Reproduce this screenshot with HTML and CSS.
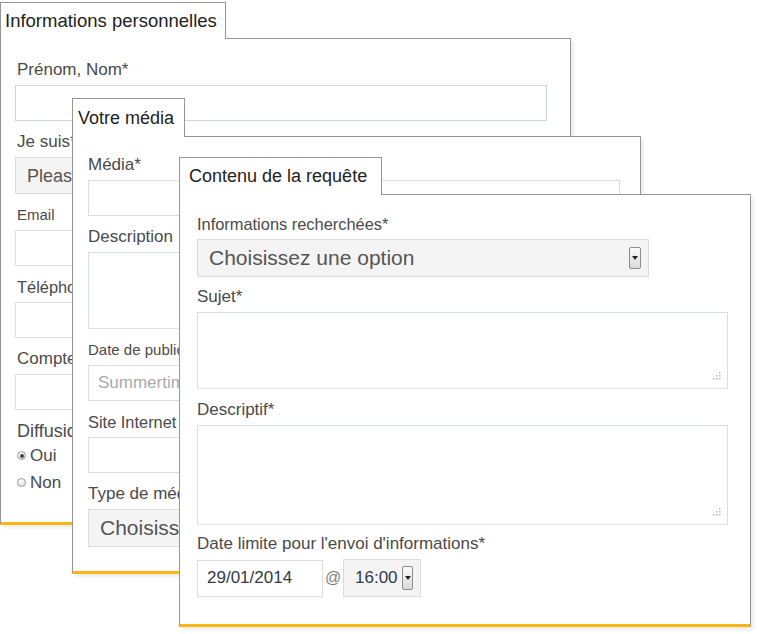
FILE: index.html
```html
<!DOCTYPE html>
<html lang="fr">
<head>
<meta charset="utf-8">
<title>Formulaire</title>
<link rel="stylesheet" href="styles.css">
</head>
<body>
<div class="canvas">

  <section class="panel p1">
    <div class="tab">Informations personnelles</div>
    <div class="pbody">
      <label class="lbl first">Prénom, Nom*</label>
      <input class="input blue" type="text">
      <label class="lbl">Je suis*</label>
      <div class="select s18"><span class="sel-text">Please</span><span class="arrow"></span></div>
      <label class="lbl f15">Email</label>
      <input class="input" type="text">
      <label class="lbl f16">Téléphone</label>
      <input class="input" type="text">
      <label class="lbl">Compte</label>
      <input class="input" type="text">
      <label class="lbl f18">Diffusion</label>
      <div class="radio-row first-radio"><span class="radio checked"></span><span>Oui</span></div>
      <div class="radio-row"><span class="radio"></span><span>Non</span></div>
    </div>
  </section>

  <section class="panel p2">
    <div class="tab">Votre média</div>
    <div class="pbody">
      <label class="lbl first">Média*</label>
      <input class="input" type="text">
      <label class="lbl">Description</label>
      <div class="textarea h77"></div>
      <label class="lbl f15">Date de publication</label>
      <input class="input" type="text" placeholder="Summertime">
      <label class="lbl f16">Site Internet</label>
      <input class="input" type="text">
      <label class="lbl">Type de média</label>
      <div class="select s21"><span class="sel-text">Choisissez une option</span><span class="arrow"></span></div>
    </div>
  </section>

  <section class="panel p3">
    <div class="tab">Contenu de la requête</div>
    <div class="pbody">
      <label class="lbl first f16">Informations recherchées*</label>
      <div class="select s21 narrow"><span class="sel-text">Choisissez une option</span><span class="arrow"></span></div>
      <label class="lbl">Sujet*</label>
      <div class="textarea h77">
        <svg class="grip" width="10" height="10" viewBox="0 0 10 10"><g fill="#b8b8b8"><rect x="8" y="0" width="1.5" height="1.5"/><rect x="5" y="3" width="1.5" height="1.5"/><rect x="8" y="3" width="1.5" height="1.5"/><rect x="2" y="6" width="1.5" height="1.5"/><rect x="5" y="6" width="1.5" height="1.5"/><rect x="8" y="6" width="1.5" height="1.5"/></g></svg>
      </div>
      <label class="lbl g11">Descriptif*</label>
      <div class="textarea h100">
        <svg class="grip" width="10" height="10" viewBox="0 0 10 10"><g fill="#b8b8b8"><rect x="8" y="0" width="1.5" height="1.5"/><rect x="5" y="3" width="1.5" height="1.5"/><rect x="8" y="3" width="1.5" height="1.5"/><rect x="2" y="6" width="1.5" height="1.5"/><rect x="5" y="6" width="1.5" height="1.5"/><rect x="8" y="6" width="1.5" height="1.5"/></g></svg>
      </div>
      <label class="lbl g9">Date limite pour l'envoi d'informations*</label>
      <div class="datetime">
        <input class="input date" type="text" value="29/01/2014">
        <span class="at">@</span>
        <div class="select time"><span class="sel-text">16:00</span><span class="arrow"></span></div>
      </div>
    </div>
  </section>

</div>
</body>
</html>
```

FILE: styles.css
```css
html, body {
  margin: 0;
  padding: 0;
  background: #fff;
}

.canvas {
  position: relative;
  width: 757px;
  height: 634px;
  overflow: hidden;
  font-family: "Liberation Sans", Arial, sans-serif;
  color: #4a4a4a;
}

.panel {
  position: absolute;
  display: flex;
  flex-direction: column;
  align-items: flex-start;
}

.p1 { left: 0; top: 2px; z-index: 1; --gap: 11px; }
.p2 { left: 72px; top: 98px; z-index: 2; --gap: 11px; }
.p3 { left: 179px; top: 157px; z-index: 3; --gap: 10px; }

.tab {
  position: relative;
  z-index: 1;
  margin-bottom: -1px;
  box-sizing: border-box;
  background: #fff;
  border: 1px solid #959595;
  border-bottom: 0;
  display: flex;
  align-items: center;
  font-size: 18px;
  color: #222;
  padding-left: 5px;
  white-space: nowrap;
}

.p1 .tab { width: 226px; height: 37px; font-size: 18.5px; padding-left: 4px; }
.p2 .tab { width: 113px; height: 39px; }
.p3 .tab { width: 203px; height: 38px; padding-left: 9px; }

.pbody {
  box-sizing: border-box;
  background: #fff;
  border: 1px solid #959595;
  border-bottom: 3px solid #fab512;
  box-shadow: 3px 3px 3px rgba(0, 0, 0, 0.07);
  display: flex;
  flex-direction: column;
  align-items: flex-start;
  overflow: hidden;
}

.p1 .pbody { width: 571px; height: 487px; padding: 21px 0 0 14px; }
.p2 .pbody { width: 569px; height: 438px; padding: 18px 0 0 15px; }
.p3 .pbody { width: 572px; height: 433px; padding: 19px 0 0 17px; }

.lbl {
  display: block;
  font-size: 17px;
  line-height: 16px;
  height: 16px;
  margin-top: calc(var(--gap) + 2px);
  margin-bottom: 7px;
  white-space: nowrap;
  color: #4a4a4a;
}
.p1 .lbl { margin-left: 2px; }
.lbl.first { margin-top: 2px; }
.lbl.f15 { font-size: 15px; }
.lbl.f16 { font-size: 16.4px; }
.lbl.f18 { font-size: 18px; }
.lbl.g11 { margin-top: 13px; }
.lbl.g9 { margin-top: 11px; }

.input {
  box-sizing: border-box;
  width: 532px;
  height: 36px;
  margin: 0;
  padding: 0 9px;
  border: 1px solid #dddddd;
  background: #fff;
  font-family: inherit;
  font-size: 17px;
  color: #333a44;
  outline: none;
  flex: none;
}
.input.blue { border-color: #cbd8e4; }
.input::placeholder { color: #aaaaaa; }

.textarea {
  position: relative;
  box-sizing: border-box;
  width: 532px;
  border: 1px solid #d6dee6;
  border-bottom-color: #e2e2e2;
  background: #fff;
  flex: none;
}
.p3 .textarea { width: 531px; }
.textarea.h77 { height: 77px; }
.textarea.h100 { height: 100px; }

.grip {
  position: absolute;
  right: 6px;
  bottom: 6px;
}

.select {
  box-sizing: border-box;
  width: 532px;
  height: 38px;
  border: 1px solid #dcdcdc;
  background: #f4f4f4;
  display: flex;
  align-items: center;
  padding: 0 7px 0 11px;
  color: #555;
  flex: none;
}
.select.s18 { font-size: 18px; height: 37px; }
.select.s21 { font-size: 21px; }
.select.narrow { width: 452px; }

.sel-text {
  flex: 1;
  line-height: 16px;
  white-space: nowrap;
  overflow: visible;
}

.arrow {
  position: relative;
  box-sizing: border-box;
  width: 12px;
  height: 22px;
  border: 1px solid #8c8c8c;
  border-radius: 2px;
  background: linear-gradient(#fbfbfb, #dadada);
  flex: none;
}
.arrow::after {
  content: "";
  position: absolute;
  left: 2px;
  top: 8px;
  border-left: 3px solid transparent;
  border-right: 3px solid transparent;
  border-top: 4px solid #222;
}

.datetime {
  display: flex;
  align-items: center;
}

.input.date {
  width: 126px;
  height: 37px;
}

.at {
  width: 20px;
  text-align: center;
  font-size: 16px;
  color: #7a7a7a;
}

.select.time {
  width: 78px;
  height: 38px;
  font-size: 17px;
  color: #333a44;
  padding: 0 7px 0 11px;
}
.select.time .arrow { width: 11px; height: 24px; }
.select.time .arrow::after { left: 2px; top: 9px; }

.radio-row {
  display: flex;
  align-items: center;
  height: 27px;
  font-size: 17px;
  color: #4a4a4a;
  margin-left: 2px;
}
.radio-row.first-radio { margin-top: -4px; }

.radio {
  box-sizing: border-box;
  width: 9px;
  height: 9px;
  border-radius: 50%;
  border: 1px solid #9a9a9a;
  background: radial-gradient(circle at 40% 35%, #ffffff, #d8d8d8);
  margin-right: 4px;
  position: relative;
}
.radio.checked::after {
  content: "";
  position: absolute;
  left: 1.5px;
  top: 1.5px;
  width: 4px;
  height: 4px;
  border-radius: 50%;
  background: #444;
}
```
